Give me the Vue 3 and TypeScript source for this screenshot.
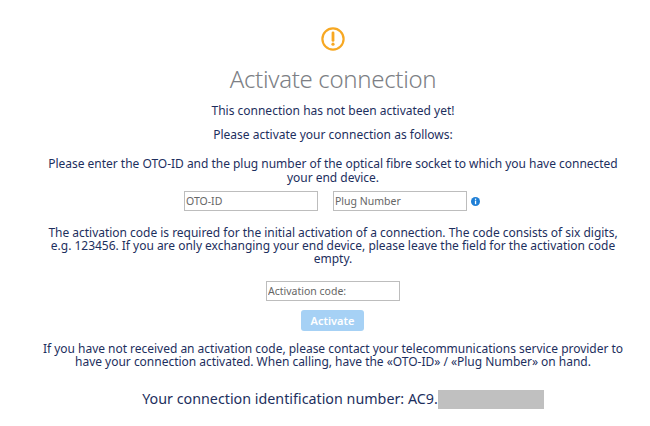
<template>
  <div class="page">
    <svg class="warn" width="24" height="24" viewBox="0 0 24 24" fill="none">
      <circle cx="12" cy="12" r="10.6" stroke="#f7a823" stroke-width="2.2" />
      <path d="M12 5.8v7.6" stroke="#f7a823" stroke-width="2.8" stroke-linecap="round" />
      <circle cx="12" cy="17.2" r="1.6" fill="#f7a823" />
    </svg>
    <h1 class="title">Activate connection</h1>
    <p class="line first">This connection has not been activated yet!</p>
    <p class="line second">Please activate your connection as follows:</p>
    <p class="para enter">
      Please enter the OTO-ID and the plug number of the optical fibre socket to which you have connected your end device.
    </p>
    <div class="fields">
      <input class="field" type="text" placeholder="OTO-ID" />
      <div class="plug">
        <input class="field" type="text" placeholder="Plug Number" />
        <svg class="info" width="9" height="9" viewBox="0 0 9 9">
          <circle cx="4.5" cy="4.5" r="4.5" fill="#1f7fd6" />
          <rect x="3.9" y="1.6" width="1.3" height="1.3" fill="#fff" />
          <rect x="3.9" y="3.6" width="1.3" height="3.6" fill="#fff" />
        </svg>
      </div>
    </div>
    <p class="para code-text">
      The activation code is required for the initial activation of a connection. The code consists of six digits, e.g. 123456. If you are only exchanging your end device, please leave the field for the activation code empty.
    </p>
    <input class="field code" type="text" placeholder="Activation code:" />
    <button class="activate" type="button" disabled>Activate</button>
    <p class="para help">
      If you have not received an activation code, please contact your telecommunications service provider to have your connection activated. When calling, have the «OTO-ID» / «Plug Number» on hand.
    </p>
    <div class="ident">
      <span>Your connection identification number: AC9.</span><span class="masked"></span>
    </div>
  </div>
</template>

<script setup lang="ts">
</script>

<style>
html,
body {
  margin: 0;
  background: #fff;
}
</style>

<style scoped>
.page {
  width: 650px;
  height: 426px;
  box-sizing: border-box;
  padding: 27px 0 0 16px;
  display: flex;
  flex-direction: column;
  align-items: center;
  overflow: hidden;
  font-family: "Noto Sans", "Open Sans", sans-serif;
  font-size: 12px;
  color: #1d2f5e;
  text-align: center;
}

.warn {
  display: block;
}

.title {
  margin: 13px 0 0;
  font-size: 24px;
  line-height: 30px;
  font-weight: 300;
  letter-spacing: -0.32px;
  color: #7d7f85;
}

.line,
.para {
  margin: 0;
  line-height: 13px;
}

.first {
  margin-top: 10px;
}

.second {
  margin-top: 11px;
}

.para {
  width: 590px;
  letter-spacing: -0.02px;
}

.enter {
  margin-top: 16px;
  line-height: 14px;
}

.fields {
  margin-top: 6px;
  margin-right: 2px;
  display: flex;
  gap: 15px;
}

.plug {
  display: flex;
  align-items: center;
  gap: 4px;
}

.field {
  width: 134px;
  height: 20px;
  box-sizing: border-box;
  padding: 0 1px;
  border: 1px solid #bdbdbd;
  border-radius: 0;
  outline: none;
  background: #fff;
  font: inherit;
  font-size: 10.5px;
}

.field::placeholder {
  color: #666;
  opacity: 1;
}

.code-text {
  margin-top: 15px;
}

.code {
  margin-top: 16px;
}

.activate {
  margin-top: 9px;
  margin-right: 1px;
  width: 63px;
  height: 21px;
  padding: 0;
  border: none;
  border-radius: 3px;
  background: #a6d1f5;
  color: #fff;
  font: inherit;
  font-size: 11px;
  font-weight: 600;
}

.help {
  margin-top: 11px;
  width: 600px;
}

.ident {
  margin-top: 21px;
  margin-left: 20px;
  display: flex;
  align-items: center;
  font-size: 14.3px;
  line-height: 20px;
}

.masked {
  display: block;
  width: 106px;
  height: 19px;
  background: #c0c0c0;
}
</style>
